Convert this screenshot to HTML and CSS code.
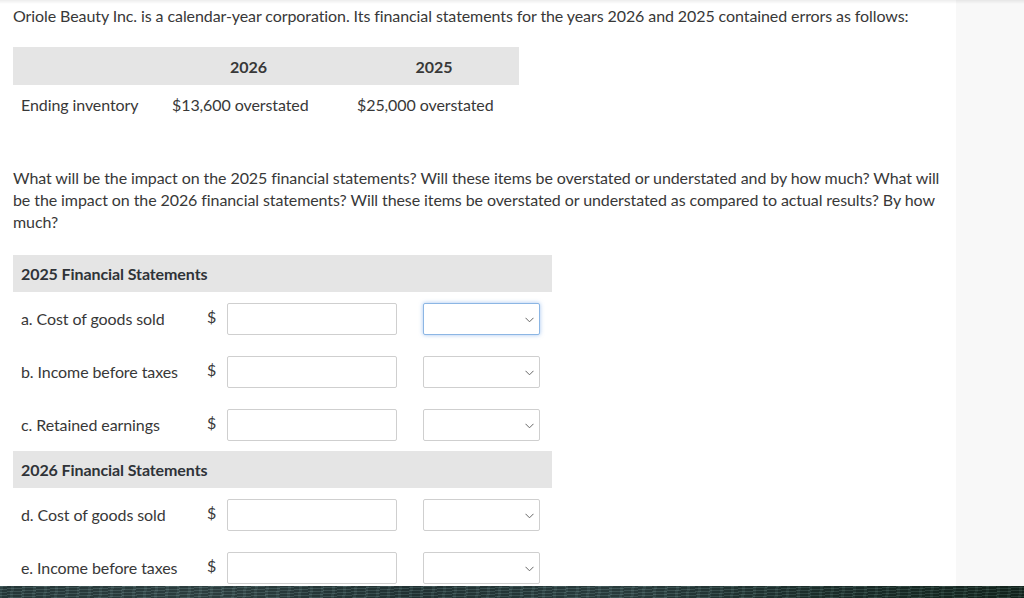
FILE: index.html
```html
<!DOCTYPE html>
<html lang="en">
<head>
    <meta charset="UTF-8">
    <meta name="viewport" content="width=device-width, initial-scale=1.0">
    <title>Accounting Errors</title>
    <link rel="stylesheet" href="styles.css">
</head>
<body>
    <div class="page">
        <div class="content">
            <p class="intro">Oriole Beauty Inc. is a calendar-year corporation. Its financial statements for the years 2026 and 2025 contained errors as follows:</p>

            <table class="errors">
                <thead>
                    <tr>
                        <th class="col-label"></th>
                        <th class="col-2026">2026</th>
                        <th class="col-2025">2025</th>
                    </tr>
                </thead>
                <tbody>
                    <tr>
                        <td>Ending inventory</td>
                        <td>$13,600 overstated</td>
                        <td>$25,000 overstated</td>
                    </tr>
                </tbody>
            </table>

            <p class="question">What will be the impact on the 2025 financial statements? Will these items be overstated or understated and by how much? What will be the impact on the 2026 financial statements? Will these items be overstated or understated as compared to actual results? By how much?</p>

            <div class="answers">
                <div class="band">2025 Financial Statements</div>
                <div class="row">
                    <span class="label">a. Cost of goods sold</span>
                    <span class="dollar">$</span>
                    <input class="amount" type="text">
                    <div class="choice focused">
                        <select><option></option><option>Overstated</option><option>Understated</option></select>
                        <svg class="chev" width="9" height="6" viewBox="0 0 9 6"><path d="M0.5 0.8 L4.5 4.8 L8.5 0.8" fill="none" stroke="#666" stroke-width="1"/></svg>
                    </div>
                </div>
                <div class="row">
                    <span class="label">b. Income before taxes</span>
                    <span class="dollar">$</span>
                    <input class="amount" type="text">
                    <div class="choice">
                        <select><option></option><option>Overstated</option><option>Understated</option></select>
                        <svg class="chev" width="9" height="6" viewBox="0 0 9 6"><path d="M0.5 0.8 L4.5 4.8 L8.5 0.8" fill="none" stroke="#666" stroke-width="1"/></svg>
                    </div>
                </div>
                <div class="row">
                    <span class="label">c. Retained earnings</span>
                    <span class="dollar">$</span>
                    <input class="amount" type="text">
                    <div class="choice">
                        <select><option></option><option>Overstated</option><option>Understated</option></select>
                        <svg class="chev" width="9" height="6" viewBox="0 0 9 6"><path d="M0.5 0.8 L4.5 4.8 L8.5 0.8" fill="none" stroke="#666" stroke-width="1"/></svg>
                    </div>
                </div>

                <div class="band">2026 Financial Statements</div>
                <div class="row">
                    <span class="label">d. Cost of goods sold</span>
                    <span class="dollar">$</span>
                    <input class="amount" type="text">
                    <div class="choice">
                        <select><option></option><option>Overstated</option><option>Understated</option></select>
                        <svg class="chev" width="9" height="6" viewBox="0 0 9 6"><path d="M0.5 0.8 L4.5 4.8 L8.5 0.8" fill="none" stroke="#666" stroke-width="1"/></svg>
                    </div>
                </div>
                <div class="row">
                    <span class="label">e. Income before taxes</span>
                    <span class="dollar">$</span>
                    <input class="amount" type="text">
                    <div class="choice">
                        <select><option></option><option>Overstated</option><option>Understated</option></select>
                        <svg class="chev" width="9" height="6" viewBox="0 0 9 6"><path d="M0.5 0.8 L4.5 4.8 L8.5 0.8" fill="none" stroke="#666" stroke-width="1"/></svg>
                    </div>
                </div>
            </div>
        </div>
        <div class="aside"></div>
    </div>
    <div class="topshade"></div>
    <div class="footer-strip"></div>
</body>
</html>
```

FILE: styles.css
```css
html, body {
    margin: 0;
    padding: 0;
    height: 100%;
    overflow: hidden;
}
body {
    font-family: 'Lato', 'Liberation Sans', sans-serif;
    font-size: 16px;
    letter-spacing: -0.09px;
    color: #383838;
    background: #fff;
}
.page {
    display: flex;
    height: 100%;
}
.content {
    width: 956px;
    padding: 0 0 0 13px;
    box-sizing: border-box;
    background: #fff;
}
.aside {
    flex: 1;
    background: #f8f8f8;
}
.topshade {
    position: fixed;
    top: 0;
    left: 0;
    right: 0;
    height: 4px;
    background: linear-gradient(rgba(0, 0, 0, 0.07), rgba(0, 0, 0, 0));
}
.footer-strip {
    position: fixed;
    left: 0;
    right: 0;
    bottom: 0;
    height: 12px;
    background:
        repeating-linear-gradient(176deg, rgba(200, 220, 220, 0.10) 0 1px, rgba(0, 0, 0, 0.14) 1px 3px),
        repeating-linear-gradient(97deg, rgba(180, 200, 200, 0.06) 0 3px, rgba(0, 0, 0, 0.12) 3px 11px),
        linear-gradient(90deg, #304849 0%, #3a5253 20%, #2a4142 40%, #354e4f 60%, #233b37 80%, #172e25 100%);
}
.intro {
    margin: 5px 0 0;
    line-height: 22px;
}
.errors {
    margin-top: 20px;
    border-collapse: collapse;
    width: 506px;
}
.errors th {
    background: #e5e5e5;
    height: 38px;
    padding: 0;
    font-weight: bold;
    text-align: center;
}
.errors td {
    height: 38px;
    padding: 0 8px;
    white-space: nowrap;
}
.col-label {
    width: 151px;
}
.col-2026 {
    width: 169px;
    padding-right: 16px !important;
}
.question {
    margin: 44px 0 0;
    line-height: 22px;
    padding-right: 8px;
}
.answers {
    margin-top: 22px;
    width: 539px;
}
.band {
    background: #e5e5e5;
    height: 37px;
    line-height: 37px;
    padding-left: 8px;
    font-weight: bold;
    color: #2f3338;
}
.row {
    display: flex;
    align-items: center;
    height: 53px;
    padding: 0 0 0 8px;
    box-sizing: border-box;
}
.label {
    width: 186px;
    line-height: 22px;
    padding-top: 1px;
}
.dollar {
    width: 20px;
    margin-top: -4px;
}
.amount {
    width: 170px;
    height: 32px;
    box-sizing: border-box;
    border: 1px solid #cfcfcf;
    border-radius: 2px;
    margin: 0;
    padding: 0 6px;
    font: inherit;
}
.choice {
    position: relative;
    margin-left: 26px;
    width: 117px;
    height: 32px;
}
.choice select {
    appearance: none;
    -webkit-appearance: none;
    width: 100%;
    height: 100%;
    box-sizing: border-box;
    border: 1px solid #cfcfcf;
    border-radius: 2px;
    background: #fff;
    margin: 0;
    font: inherit;
}
.choice.focused select {
    border-color: #8cb6e4;
    box-shadow: 0 0 4px rgba(90, 150, 225, 0.55);
}
.chev {
    position: absolute;
    right: 6px;
    top: 14px;
}
```
